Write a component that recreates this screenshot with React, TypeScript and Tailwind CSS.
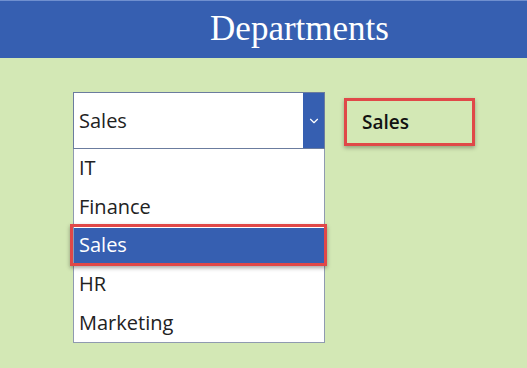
import { ChevronDown } from "lucide-react";

const items = ["IT", "Finance", "Sales", "HR", "Marketing"];

export default function App() {
  const selected = "Sales";
  return (
    <div
      className="w-[527px] h-[368px] bg-[#d3e8b5] overflow-hidden"
      style={{ fontFamily: '"Open Sans", "Noto Sans", sans-serif' }}
    >
      <div className="h-[58px] bg-[#365fb1] border-t border-[#6f8fcf] flex items-center justify-center pl-[72px]">
        <h1 className="text-white text-[35px] leading-none pb-[2px]" style={{ fontFamily: '"Liberation Serif", Georgia, serif' }}>
          Departments
        </h1>
      </div>

      <div className="flex items-start pl-[73px] pt-[34px] gap-[19px]">
        <div className="w-[252px]">
          <div className="h-[57px] bg-white border border-[#6b7c9e] flex items-stretch">
            <span className="flex-1 flex items-center pl-[5px] text-[20px] text-[#222]">{selected}</span>
            <div className="w-[21px] bg-[#365fb1] flex items-center justify-center">
              <ChevronDown className="w-[14px] h-[14px] text-white" strokeWidth={2} />
            </div>
          </div>
          <div className="bg-white border border-t-0 border-[#8f9ab0]">
            {items.map((item) => {
              const active = item === selected;
              return (
                <div key={item} className="relative h-[38.6px] flex items-center">
                  {active ? (
                    <>
                      <div className="absolute left-0 right-0 top-[2px] h-[35px] bg-[#365fb1]" />
                      <div className="absolute -left-[4px] -right-[3px] -top-[2px] h-[42px] border-[3px] border-[#e04848] shadow-[0_2px_4px_rgba(0,0,0,0.35)]" />
                      <span className="relative pl-[5px] text-[20px] text-white">{item}</span>
                    </>
                  ) : (
                    <span className="pl-[5px] text-[20px] text-[#222]">{item}</span>
                  )}
                </div>
              );
            })}
          </div>
        </div>

        <div className="mt-[6px] w-[131px] h-[48px] border-[3px] border-[#e04848] shadow-[0_2px_4px_rgba(0,0,0,0.3)] flex items-center pl-[15px]">
          <span className="text-[19px] font-semibold text-[#111]">Sales</span>
        </div>
      </div>
    </div>
  );
}
